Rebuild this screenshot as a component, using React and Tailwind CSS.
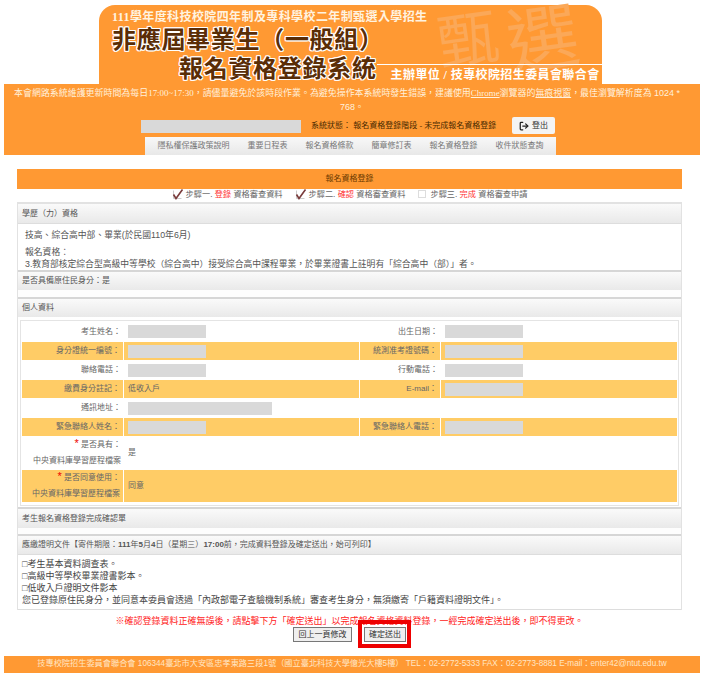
import { LogOut } from 'lucide-react';

const SANS = 'font-["Liberation_Sans","Noto_Sans_CJK_TC",sans-serif]';
const SERIF = 'font-["Liberation_Serif","Noto_Sans_CJK_TC",serif]';
const HEAD = 'flex items-center border-t-2 border-[#d6d6d6] bg-gradient-to-b from-[#fafafa] to-[#e9e9e9] pl-1 text-[8px] text-[#555]';
const TITLE_STROKE = 'text-[#5a2d06] [text-shadow:1px_0_0_#fff,-1px_0_0_#fff,0_1px_0_#fff,0_-1px_0_#fff,1px_1px_0_#fff,-1px_-1px_0_#fff,1px_-1px_0_#fff,-1px_1px_0_#fff]';

const NAV = ['隱私權保護政策說明', '重要日程表', '報名資格條款', '簡章修訂表', '報名資格登錄', '收件狀態查詢'];

function Blank({ wide }) {
  return <div className={`h-[13px] bg-[#d9d9d9] ${wide ? 'w-[144px]' : 'w-[78px]'}`} />;
}

function Row({ alt, h, a, b, c, d }) {
  const cell = alt ? 'bg-[#ffcc66]' : 'bg-white';
  const line = alt ? 'border-r border-white' : '';
  return (
    <div className={`grid grid-cols-[102px_236px_81px_1fr] ${cell} ${h} text-[8px] text-[#666]`}>
      <div className={`flex items-center justify-end pr-[3px] ${line}`}>{a}</div>
      <div className={`flex items-center pl-[4px] ${line}`}>{b}</div>
      <div className={`flex items-center justify-end pr-[3px] ${line}`}>{c}</div>
      <div className="flex items-center pl-[4px]">{d}</div>
    </div>
  );
}

function WideRow({ alt, h, first, second, value }) {
  return (
    <div className={`grid grid-cols-[102px_1fr] ${alt ? 'bg-[#ffcc66]' : 'bg-white'} ${h} text-[8px] text-[#666]`}>
      <div className={`flex flex-col justify-center gap-[4px] pr-[3px] text-right ${alt ? 'border-r border-white' : ''}`}>
        <div><span className="text-[11px] leading-[8px] text-[#e00]">*</span> {first}</div>
        <div className="whitespace-nowrap">{second}</div>
      </div>
      <div className="flex items-center pl-[4px]">{value}</div>
    </div>
  );
}

function Step({ checked, label, word, rest }) {
  return (
    <div className="flex items-center">
      {checked ? (
        <svg width="12" height="12" viewBox="0 0 12 12" className="mb-[2px] mr-[2px]">
          <path d="M1.5 1.5v8h8" fill="none" stroke="#ccc" strokeWidth="1" />
          <path d="M1.5 5.5l2.5 4L10.5 .5" fill="none" stroke="#7a3b3b" strokeWidth="1.6" />
        </svg>
      ) : (
        <span className="mb-[2px] mr-[4px] ml-[1px] block size-[8px] border border-[#ddd] bg-white" />
      )}
      <span>{label} <span className="text-[#f33]">{word}</span> {rest}</span>
    </div>
  );
}

export default function App() {
  return (
    <div className={`${SANS} min-h-[689px] w-full overflow-hidden bg-white bg-[radial-gradient(#ececec_0.6px,transparent_0.6px)] bg-[length:4px_4px]`}>
      <div className="pt-[5px]">
        {/* banner */}
        <div className={`${SERIF} relative ml-[99px] h-[79px] w-[503px] rounded-t-[16px] bg-[#ff9933] font-bold`}>
          <div className="absolute left-[339px] top-0 flex items-center text-[#fba858]">
            <span className="rotate-[-8deg] text-[60px] leading-[72px] font-normal">甄</span>
            <span className="ml-[9px] rotate-[-8deg] text-[72px] leading-[72px] font-normal">選</span>
          </div>
          <div className="relative pl-[13px] pt-[5px]">
            <div className="text-[12px] leading-[14px] tracking-[0.4px] text-[#fff3e0]">111學年度科技校院四年制及專科學校二年制甄選入學招生</div>
            <div className={`${SANS} ${TITLE_STROKE} mt-[1px] text-[24px] leading-[29px] tracking-[0.7px]`}>非應屆畢業生&#xFF08;一般組&#xFF09;</div>
            <div className="flex">
              <div className={`${SANS} ${TITLE_STROKE} ml-[67px] shrink-0 text-[24px] leading-[29px] tracking-[0.7px] whitespace-nowrap`}>報名資格登錄系統</div>
              <div className="mt-[10px] h-[20px] flex-1 self-start border-t border-white pl-[14px] pt-[3px] text-[12px] leading-[14px] tracking-[0.4px] whitespace-nowrap text-white">
                主辦單位 / 技專校院招生委員會聯合會
              </div>
            </div>
          </div>
        </div>

        {/* notice bar */}
        <div className="relative mx-[4px] h-[71px] bg-[#ff9933] pt-[2px] text-center text-[8px] leading-[14px] text-[#fff0dc]">
          <div className="whitespace-nowrap pr-[10px] text-[8.95px]">
            本會網路系統維護更新時間為每日<span className={SERIF}>17:00~17:30</span>&#xFF0C;請儘量避免於該時段作業。為避免操作本系統時發生錯誤&#xFF0C;建議使用<span className={`${SERIF} underline`}>Chrome</span>瀏覽器的<span className="underline">無痕視窗</span>&#xFF0C;最佳瀏覽解析度為 1024 *
            <br />
            <span className="pl-[10px]">768。</span>
          </div>
          <div className="mt-[3px] flex h-[17px] items-center pl-[137px]">
            <div className="mt-[1px] h-[13px] w-[160px] bg-[#d9d9d9]" />
            <div className="ml-[10px] w-[188px] text-left whitespace-nowrap text-[#4a2a00]">系統狀態&#xFF1A; 報名資格登錄階段 - 未完成報名資格登錄</div>
            <div className="ml-[13px] flex h-[17px] w-[43px] items-center justify-center gap-[3px] rounded-[2px] bg-[#f4f4f4] text-[#333]">
              <LogOut size={10} strokeWidth={3} color="#222" />登出
            </div>
          </div>
          <div className="mt-[3px] ml-[141px] flex h-[18px] w-[411px] items-center justify-center gap-[18px] bg-gradient-to-b from-[#f8f8f8] to-[#e8e8e8] text-[#777]">
            {NAV.map((item) => <span key={item}>{item}</span>)}
          </div>
        </div>

        {/* main */}
        <div className="mx-[17px] mt-[14px] w-[665px]">
          <div className="flex h-[20px] items-center justify-center bg-[#ff9933] text-[8px] text-[#6b3a00]">報名資格登錄</div>
          <div className="flex h-[13px] items-center justify-center gap-[12px] text-[8.2px] text-[#666]">
            <Step checked label="步驟一." word="登錄" rest="資格審查資料" />
            <Step checked label="步驟二." word="確認" rest="資格審查資料" />
            <Step label="步驟三." word="完成" rest="資格審查申請" />
          </div>

          <div className="border-x border-[#e2e2e2] bg-white">
            <div className={`${HEAD} h-[21px] !border-t-[#e2e2e2]`}>學歷&#xFF08;力&#xFF09;資格</div>
            <div className="h-[47px] border-t border-[#ddd] pl-[7px] text-[8.8px] text-[#555]">
              <div className="pt-[5px] leading-[12px]">技高&#x3001;綜合高中部&#x3001;畢業(於民國110年6月)</div>
              <div className="mt-[5px] leading-[12px]">報名資格&#xFF1A;</div>
              <div className="leading-[12px]">3.教育部核定綜合型高級中等學校&#xFF08;綜合高中&#xFF09;接受綜合高中課程畢業&#xFF0C;於畢業證書上註明有「綜合高中&#xFF08;部&#xFF09;」者。</div>
            </div>
            <div className={`${HEAD} h-[20px]`}>是否具備原住民身分&#xFF1A;是</div>
            <div className="h-[7px] bg-[#fdfdfd]" />
            <div className={`${HEAD} h-[20px]`}>個人資料</div>

            <div className="px-[2px] pt-[3px] pb-[1px]">
              <div className="border border-[#e4e4e4] px-[1px] pb-[3px]">
                <Row h="h-[21px]" a="考生姓名&#xFF1A;" b={<Blank />} c="出生日期&#xFF1A;" d={<Blank />} />
                <Row alt h="h-[18px]" a="身分證統一編號&#xFF1A;" b={<Blank />} c="統測准考證號碼&#xFF1A;" d={<Blank />} />
                <Row h="h-[20px]" a="聯絡電話&#xFF1A;" b={<Blank />} c="行動電話&#xFF1A;" d={<Blank />} />
                <Row alt h="h-[18px]" a="繳費身分註記&#xFF1A;" b="低收入戶" c="E-mail&#xFF1A;" d={<Blank />} />
                <Row h="h-[20px]" a="通訊地址&#xFF1A;" b={<Blank wide />} />
                <Row alt h="h-[18px]" a="緊急聯絡人姓名&#xFF1A;" b={<Blank />} c="緊急聯絡人電話&#xFF1A;" d={<Blank />} />
                <WideRow h="h-[34px]" first="是否具有&#xFF1A;" second="中央資料庫學習歷程檔案" value="是" />
                <WideRow alt h="h-[32px]" first="是否同意使用&#xFF1A;" second="中央資料庫學習歷程檔案" value="同意" />
              </div>
            </div>

            <div className={`${HEAD} h-[21px]`}>考生報名資格登錄完成確認單</div>
            <div className="h-[6px] bg-[#fdfdfd]" />
            <div className={`${HEAD} h-[20px]`}>
              <span>應繳證明文件【寄件期限&#xFF1A;<b>111</b>年<b>5</b>月<b>4</b>日&#xFF08;星期三&#xFF09;<b>17:00</b>前&#xFF0C;完成資料登錄及確定送出&#xFF0C;始可列印】</span>
            </div>
            <div className="h-[56px] border-y border-[#ddd] pl-[4px] pt-[3px] text-[9px] leading-[12px] text-[#444]">
              <div>□考生基本資料調查表。</div>
              <div>□高級中等學校畢業證書影本。</div>
              <div>□低收入戶證明文件影本</div>
              <div>您已登錄原住民身分&#xFF0C;並同意本委員會透過「內政部電子查驗機制系統」審查考生身分&#xFF0C;無須繳寄「戶籍資料證明文件」。</div>
            </div>
          </div>

          <div className="mt-[5px] text-center text-[9px] leading-[12px] text-[#f22]">
            ※確認登錄資料正確無誤後&#xFF0C;請點擊下方「確定送出」以完成報名資格資料登錄&#xFF0C;一經完成確定送出後&#xFF0C;即不得更改。
          </div>
          <div className="flex h-[15px] items-center pl-[276px] text-[8px] text-[#333]">
            <button className="h-[15px] w-[59px] border border-[#777] bg-[#efefef]">回上一頁修改</button>
            <div className="relative ml-[12px]">
              <button className="block h-[15px] w-[42px] border border-[#777] bg-[#efefef]">確定送出</button>
              <span className="absolute -top-[7px] -right-[5px] -bottom-[6px] -left-[6px] border-[4px] border-[#ee0000]" />
            </div>
          </div>
        </div>

        <div className="mx-[4px] mt-[14px] flex h-[17px] items-center justify-center bg-[#ff9933] text-[8.2px] whitespace-nowrap text-[#ffe6c4]">
          技專校院招生委員會聯合會 106344臺北市大安區忠孝東路三段1號&#xFF08;國立臺北科技大學億光大樓5樓&#xFF09; TEL&#xFF1A;02-2772-5333 FAX&#xFF1A;02-2773-8881 E-mail&#xFF1A;enter42@ntut.edu.tw
        </div>
      </div>
    </div>
  );
}
